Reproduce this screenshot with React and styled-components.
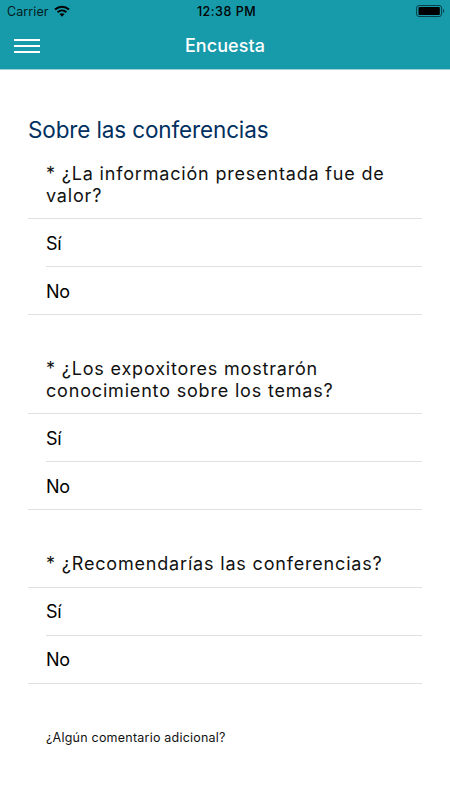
import React from 'react';
import styled, { createGlobalStyle } from 'styled-components';

const questions = [
  '* ¿La información presentada fue de valor?',
  '* ¿Los expoxitores mostrarón conocimiento sobre los temas?',
  '* ¿Recomendarías las conferencias?',
];

const App = () => {
  return (
    <Screen>
      <GlobalStyle />
      <Header>
        <StatusBar>
          <Carrier>
            <span>Carrier</span>
            <WifiIcon />
          </Carrier>
          <Time>12:38 PM</Time>
          <BatteryIcon />
        </StatusBar>
        <NavBar>
          <MenuButton aria-label="menu">
            <MenuLine />
            <MenuLine />
            <MenuLine />
          </MenuButton>
          <NavTitle>Encuesta</NavTitle>
        </NavBar>
      </Header>

      <Content>
        <SectionTitle>Sobre las conferencias</SectionTitle>
        {questions.map((question) => (
          <Group key={question}>
            <Question>{question}</Question>
            <Options>
              <Option>Sí</Option>
              <Option $last>No</Option>
            </Options>
          </Group>
        ))}
        <Comment>¿Algún comentario adicional?</Comment>
      </Content>
    </Screen>
  );
};

export default App;

const WifiIcon = () => (
  <svg width="16" height="12" viewBox="0 0 16 12">
    <g fill="none" stroke="#000" strokeWidth="2">
      <path d="M1 4.5C5 0.7 11 0.7 15 4.5" />
      <path d="M3.6 7.2C6.2 4.8 9.8 4.8 12.4 7.2" />
    </g>
    <path d="M5.5 9.1C7 7.8 9 7.8 10.5 9.1L8 11.7Z" fill="#000" />
  </svg>
);

const BatteryIcon = () => (
  <svg width="29" height="12" viewBox="0 0 29 12">
    <rect x="0.6" y="0.5" width="25" height="11" rx="2.5" fill="none" stroke="#063f47" />
    <rect x="2.5" y="2" width="21.3" height="8" rx="1" fill="#000" />
    <path d="M27 4C28.6 4.6 28.6 7.4 27 8Z" fill="#063f47" />
  </svg>
);

const GlobalStyle = createGlobalStyle`
  * {
    box-sizing: border-box;
  }

  body {
    margin: 0;
    background-color: #fff;
    font-family: Inter, 'Liberation Sans', sans-serif;
  }
`;

const Screen = styled.div`
  width: 100%;
  height: 800px;
  overflow: hidden;
  background-color: #fff;
`;

const Header = styled.header`
  height: 70px;
  background-color: #179aaa;
  border-bottom: 1px solid #a3cfd5;
`;

const StatusBar = styled.div`
  display: grid;
  grid-template-columns: 1fr auto 1fr;
  align-items: center;
  height: 22px;
  padding: 0 5px 0 7px;
  font-size: 12.5px;
  color: #000;

  > svg {
    justify-self: end;
  }
`;

const Carrier = styled.div`
  display: flex;
  align-items: center;
  gap: 6px;
  padding-top: 1px;
  color: #031c20;
  letter-spacing: 0.1px;

  svg {
    margin: -2px 0 0 -1px;
  }
`;

const Time = styled.div`
  padding: 1px 0 0 1px;
  font-weight: 500;
  letter-spacing: 0.5px;
`;

const NavBar = styled.div`
  display: grid;
  grid-template-columns: 1fr auto 1fr;
  align-items: center;
  height: 47px;
  padding: 1px 14px 0;
`;

const MenuButton = styled.button`
  display: flex;
  flex-direction: column;
  gap: 4.4px;
  width: 26px;
  padding: 0;
  border: 0;
  background: none;
`;

const MenuLine = styled.span`
  height: 2px;
  background-color: #fff;
`;

const NavTitle = styled.h1`
  margin: 0 0 2px;
  font-size: 18px;
  font-weight: 500;
  letter-spacing: 0.08px;
  color: #fff;
`;

const Content = styled.main`
  padding: 46px 28px 0;
`;

const SectionTitle = styled.h2`
  margin: 0 0 20.4px;
  font-size: 22.5px;
  line-height: 27px;
  font-weight: 400;
  letter-spacing: -0.13px;
  color: #003060;
`;

const Group = styled.section`
  margin-bottom: 43px;
`;

const Question = styled.div`
  padding: 0 18px 11.6px;
  font-size: 18px;
  line-height: 21.7px;
  letter-spacing: 0.82px;
  color: #111;
`;

const Options = styled.div`
  border-top: 1px solid #e0e0e0;
  border-bottom: 1px solid #e0e0e0;
`;

const Option = styled.div`
  display: flex;
  align-items: center;
  height: ${({ $last }) => ($last ? '47px' : '48px')};
  margin-left: 18px;
  padding-top: 1px;
  border-bottom: ${({ $last }) => ($last ? '0' : '1px solid #e0e0e0')};
  font-size: 18px;
  letter-spacing: -0.3px;
  color: #000;
`;

const Comment = styled.div`
  padding-left: 18px;
  padding-top: 3px;
  font-size: 12.5px;
  line-height: 16px;
  letter-spacing: 0.22px;
  color: #111;
`;
